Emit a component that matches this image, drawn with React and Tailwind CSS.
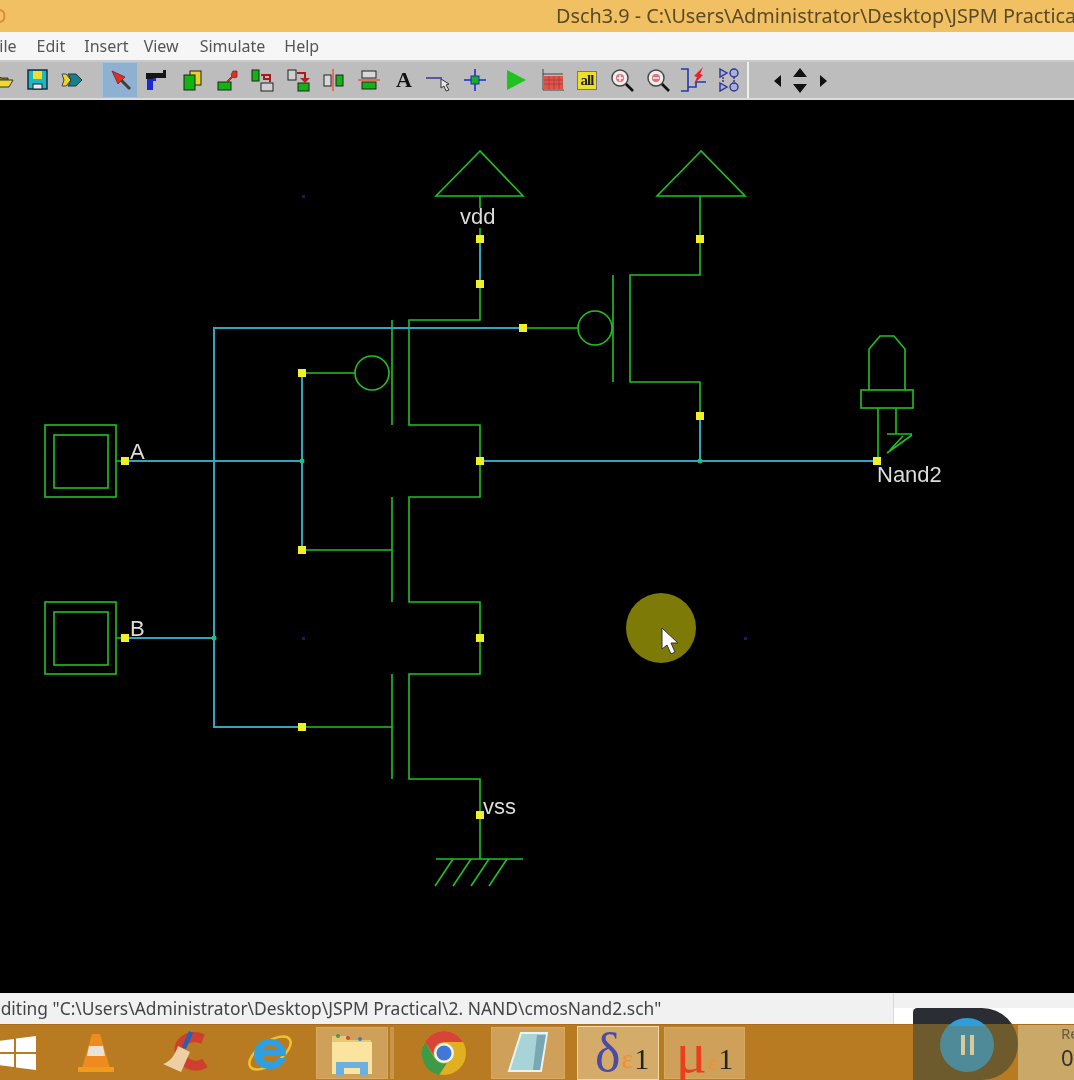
const FONT = "font-['Noto_Sans','Open_Sans',sans-serif]";

const MENU = [
  ['File', 'ml-[-9px]'],
  ['Edit', 'ml-[20px]'],
  ['Insert', 'ml-[19px]'],
  ['View', 'ml-[15px]'],
  ['Simulate', 'ml-[21px]'],
  ['Help', 'ml-[19px]'],
];

// Toolbar glyphs, all on a 24x24 box
function Open() {
  return (
    <svg width="24" height="24" viewBox="0 0 24 24">
      <path d="M2 8h7l2 2h7v3H7l-3 6H2z" fill="#8a7a20" stroke="#333" />
      <path d="M7 12h16l-4 7H3z" fill="#eed92c" stroke="#333" />
    </svg>
  );
}
function Save() {
  return (
    <svg width="24" height="24" viewBox="0 0 24 24">
      <rect x="3" y="2" width="19" height="19" fill="#19b9c4" stroke="#123" strokeWidth="1.4" />
      <rect x="8" y="3" width="9" height="8" fill="#f2dc2c" />
      <rect x="8" y="16" width="9" height="5" fill="#e8e8e8" stroke="#123" />
    </svg>
  );
}
function Chip() {
  return (
    <svg width="24" height="24" viewBox="0 0 24 24">
      <path d="M2 6h4l5 6-5 6H2l2-6z" fill="#e9d82a" stroke="#444" />
      <path d="M8 6h8l6 6-6 6H8l3-6z" fill="#17808a" stroke="#234" />
    </svg>
  );
}
function Pointer() {
  return (
    <svg width="24" height="24" viewBox="0 0 24 24">
      <path d="M11 11l10 10" stroke="#4a3a3a" strokeWidth="3" />
      <path d="M3 3l13 6-7 7z" fill="#e52a20" stroke="#5a3030" strokeWidth="0.8" />
    </svg>
  );
}
function Gun() {
  return (
    <svg width="24" height="24" viewBox="0 0 24 24">
      <path d="M3 9h9v4H9v9H3z" fill="#1e28d8" />
      <path d="M2 5h17V2h3v8H9v1H2z" fill="#151515" />
    </svg>
  );
}
function Copy() {
  return (
    <svg width="24" height="24" viewBox="0 0 24 24">
      <rect x="10" y="3" width="11" height="14" fill="#e8d22a" stroke="#222" />
      <rect x="4" y="7" width="11" height="15" fill="#12b312" stroke="#222" />
    </svg>
  );
}
function MoveUp() {
  return (
    <svg width="24" height="24" viewBox="0 0 24 24">
      <rect x="3" y="14" width="13" height="8" fill="#12b312" stroke="#222" />
      <path d="M12 13l5-5-1-1 2-4h4v6l-3 1-1-1-5 5z" fill="#d8342a" stroke="#622" strokeWidth="0.7" />
    </svg>
  );
}
function SwapA() {
  return (
    <svg width="24" height="24" viewBox="0 0 24 24">
      <rect x="2" y="2" width="7" height="11" fill="#12b312" stroke="#222" />
      <rect x="11" y="15" width="12" height="8" fill="#cfcfcf" stroke="#222" />
      <path d="M11 7h9v7M14 7v4h6" fill="none" stroke="#a81c1c" strokeWidth="2" />
    </svg>
  );
}
function SwapB() {
  return (
    <svg width="24" height="24" viewBox="0 0 24 24">
      <rect x="2" y="2" width="8" height="10" fill="#cfcfcf" stroke="#222" />
      <rect x="12" y="15" width="11" height="8" fill="#12b312" stroke="#222" />
      <path d="M11 5h8v5" fill="none" stroke="#a81c1c" strokeWidth="2" />
      <path d="M14 10h10l-5 5z" fill="#b82020" />
    </svg>
  );
}
function MirrorV() {
  return (
    <svg width="24" height="24" viewBox="0 0 24 24">
      <rect x="3" y="7" width="7" height="11" fill="#d8d8d8" stroke="#222" />
      <rect x="15" y="7" width="7" height="11" fill="#12b312" stroke="#222" />
      <path d="M12 1v22" stroke="#e0584a" strokeWidth="1.5" />
    </svg>
  );
}
function MirrorH() {
  return (
    <svg width="24" height="24" viewBox="0 0 24 24">
      <rect x="5" y="3" width="14" height="7" fill="#d8d8d8" stroke="#222" />
      <rect x="5" y="14" width="14" height="7" fill="#12b312" stroke="#222" />
      <path d="M1 12h22" stroke="#e0584a" strokeWidth="1.5" />
    </svg>
  );
}
function TextTool() {
  return <span className="font-['Liberation_Serif',serif] text-[22px] leading-none font-bold text-[#111]">A</span>;
}
function WireTool() {
  return (
    <svg width="26" height="24" viewBox="0 0 26 24">
      <path d="M0 10h16" stroke="#4338b8" strokeWidth="1.6" />
      <path d="M15 11l8 5-3 1 3 5-3 1-2-5-3 2z" fill="#e8e8e8" stroke="#333" />
    </svg>
  );
}
function NodeTool() {
  return (
    <svg width="24" height="24" viewBox="0 0 24 24">
      <path d="M1 12h22M12 1v22" stroke="#1c2bd0" strokeWidth="1.6" />
      <rect x="8" y="8" width="8" height="8" fill="#12b312" stroke="#1c2bd0" />
    </svg>
  );
}
function Play() {
  return (
    <svg width="24" height="24" viewBox="0 0 24 24">
      <path d="M3 2l19 10-19 10z" fill="#1ec31e" />
    </svg>
  );
}
function Timing() {
  return (
    <svg width="24" height="24" viewBox="0 0 24 24">
      <path d="M3 1v21h21M3 6h20" fill="none" stroke="#444" />
      <rect x="4" y="8" width="19" height="13" fill="#e2534a" />
      <path d="M4 12h19M4 16h19M9 8v13M14 8v13M19 8v13" stroke="#a83a3a" strokeWidth="0.8" />
    </svg>
  );
}
function AllTool() {
  return (
    <div className="w-[20px] h-[19px] bg-[#eee02a] border border-[#777] flex items-center justify-center font-['Liberation_Serif',serif] font-bold text-[15px] leading-none tracking-[-1px] text-[#222]">
      all
    </div>
  );
}
function Zoom({ minus }) {
  return (
    <svg width="24" height="24" viewBox="0 0 24 24">
      <path d="M15 15l8 8" stroke="#111" strokeWidth="2.6" />
      <circle cx="10" cy="10" r="8" fill="#eee" stroke="#444" strokeWidth="1.4" />
      <circle cx="10" cy="10" r="4" fill="#e0707a" />
      <path d={minus ? 'M7 10h6' : 'M7 10h6M10 7v6'} stroke="#fff" strokeWidth="1.4" />
    </svg>
  );
}
function Probe() {
  return (
    <svg width="28" height="28" viewBox="0 0 28 28">
      <path d="M2 3h7v22H2M9 21h8v-5h10" fill="none" stroke="#2438b0" strokeWidth="1.6" />
      <path d="M24 1l-9 9 3 1-3 7 9-9-3-1z" fill="#e8202a" />
    </svg>
  );
}
function Gates() {
  return (
    <svg width="22" height="28" viewBox="0 0 22 28" fill="#a8b0d8" stroke="#2a3490" strokeWidth="1.4">
      <path d="M2 3l7 4-7 4z" />
      <circle cx="16" cy="7" r="4" />
      <path d="M2 17l7 4-7 4z" />
      <circle cx="16" cy="21" r="4" />
      <path d="M5 11v6M16 11v6" fill="none" strokeDasharray="2 1" />
    </svg>
  );
}

const TOOLS = [
  [Open, 'ml-[-16px]'],
  [Save, ''],
  [Chip, ''],
  [Pointer, 'ml-[12px] pl-[3px]', true],
  [Gun, 'ml-[1px]'],
  [Copy, ''],
  [MoveUp, ''],
  [SwapA, ''],
  [SwapB, ''],
  [MirrorV, ''],
  [MirrorH, ''],
  [TextTool, ''],
  [WireTool, ''],
  [NodeTool, ''],
  [Play, 'ml-[6px]'],
  [Timing, ''],
  [AllTool, ''],
  [Zoom, ''],
  [() => <Zoom minus />, ''],
  [Probe, ''],
  [Gates, ''],
];

function Toolbar() {
  return (
    <div className="h-[40px] shrink-0 flex items-stretch bg-[#bdbdbd] border-t-2 border-[#c9c9c9] border-b-2 border-b-[#dcdcdc] overflow-hidden">
      <div className="flex items-center w-[749px] shrink-0 border-r-2 border-[#f0f0f0]">
        {TOOLS.map(([Icon, margin, active], i) => (
          <div
            key={i}
            className={`w-[35.4px] h-[36px] shrink-0 flex items-center justify-center ${margin} ${active ? 'bg-[#8fb1d1] border border-[#a8c0d8]' : ''}`}
          >
            <Icon />
          </div>
        ))}
      </div>
      <svg width="70" height="36" viewBox="0 0 70 36" className="ml-[20px]">
        <path d="M5 19l7-6v12zM24 15l7-9 7 9zM24 22h14l-7 9z" fill="#111" />
        <path d="M51 13l7 6-7 6z" fill="#111" />
      </svg>
    </div>
  );
}

const nodes = [
  [480, 239], [480, 284], [523, 328], [302, 373], [302, 550], [302, 727], [480, 461], [480, 638],
  [480, 815], [125, 461], [125, 638], [700, 239], [700, 416], [877, 461],
];

function Schematic() {
  return (
    <svg width="1074" height="893" viewBox="0 100 1074 893" className="block bg-black">
      {[[303, 196], [303, 638], [745, 638]].map(([x, y]) => (
        <rect key={`${x}${y}`} x={x - 1} y={y - 1} width="3" height="3" fill="#15157a" />
      ))}

      <g fill="none" stroke="#22c022" strokeWidth="1.6">
        {/* power symbols */}
        <path d="M480 151L436 196H523ZM480 196V208M480 228V239" />
        <path d="M701 151L657 196H745ZM700 196V275H630V382H700V416" />

        {/* series stack */}
        <path d="M480 284V320H409V425H480V497H409V602H480V674H409V779H480V859" />
        <path d="M392 320V425M392 497V602M392 674V779M613 275V382" />
        <circle cx="372" cy="373" r="17" />
        <circle cx="595" cy="328" r="17" />
        <path d="M302 373H355M302 550H392M302 727H392M523 328H578M116 461H125M116 638H125" />

        {/* ground */}
        <path d="M436 859H523M453 859L435 886M471 859L453 886M489 859L471 886M507 859L489 886" />

        {/* inputs */}
        <rect x="45" y="425" width="71" height="72" />
        <rect x="54" y="435" width="54" height="53" />
        <rect x="45" y="602" width="71" height="72" />
        <rect x="54" y="612" width="54" height="53" />

        {/* output led */}
        <path d="M869 390V349L880 336H894L905 349V390" />
        <rect x="861" y="390" width="52" height="18" />
        <path d="M878 408V461M896 408V434M887 434H912M912 435L887 453M903 436L890 450" />
      </g>

      <g fill="none" stroke="#2fa6bc" strokeWidth="2">
        <path d="M480 239V284M302 373V550M700 416V461" />
        <path d="M523 328H214V727H302M125 461H302M125 638H214M480 461H877" />
      </g>

      {[[302, 461], [214, 638], [700, 461]].map(([x, y]) => (
        <circle key={`${x}${y}`} cx={x} cy={y} r="2.5" fill="#1fc080" />
      ))}
      {nodes.map(([x, y]) => (
        <rect key={`${x}-${y}`} x={x - 4} y={y - 4} width="8" height="8" fill="#f0f02a" />
      ))}

      <g fill="#dcdcdc" fontSize="22" fontFamily="'Liberation Sans', sans-serif">
        <text x="460" y="224">vdd</text>
        <text x="483" y="814">vss</text>
        <text x="130" y="459">A</text>
        <text x="130" y="636">B</text>
        <text x="877" y="482">Nand2</text>
      </g>

      {/* recorder's cursor highlight */}
      <circle cx="661" cy="628" r="35" fill="#7d7a08" />
      <path d="M662 628V649L667 645L671 654L675 652L671 643L678 643Z" fill="#fff" stroke="#333" />
    </svg>
  );
}

function Windows() {
  return (
    <svg width="36" height="36" viewBox="0 0 36 36" fill="#fff">
      <path d="M-2 6L14 4V17H-2zM16 3.600L36 1V17H16zM-2 19H14V32L-2 30zM16 19H36V35L16 32.400z" />
    </svg>
  );
}
function Cone() {
  return (
    <svg width="38" height="42" viewBox="0 0 38 42">
      <path d="M15 2h8l10 34H5z" fill="#ee8a1e" />
      <path d="M12 14h14l2 10H10z" fill="#e8e2d8" />
      <path d="M1 35h36v5H1z" fill="#f29a1a" />
    </svg>
  );
}
function Cleaner() {
  return (
    <svg width="48" height="46" viewBox="0 0 48 46">
      <path d="M42 9C26 3 14 14 20 26c5 10 16 12 24 7" fill="none" stroke="#cf3f30" strokeWidth="10" />
      <path d="M30 2L23 18" stroke="#2860b8" strokeWidth="4.5" />
      <path d="M17 16l12 6-9 20-18-8c7-2 12-9 15-18z" fill="#ecd0a4" />
    </svg>
  );
}
function Explorer() {
  return (
    <svg width="46" height="46" viewBox="0 0 46 46">
      <ellipse cx="23" cy="23" rx="24" ry="11" transform="rotate(-35 23 23)" fill="none" stroke="#f0c22e" strokeWidth="2.500" />
      <path d="M7 25C7 15 14 9 23 9s16 6 16 17H16c1 7 11 8 15 2h8c-3 8-9 11-16 11C14 39 7 33 7 25zM16 20h15c-1-6-14-6-15 0z" fill="#2e9fe0" />
    </svg>
  );
}
function Folder() {
  return (
    <svg width="44" height="46" viewBox="0 0 44 46">
      <path d="M2 6h14l3 4h22v12H2z" fill="#e8c878" />
      <rect x="2" y="12" width="40" height="32" fill="#fbe3a0" />
      <circle cx="8" cy="6" r="2" fill="#4a9a4a" />
      <circle cx="18" cy="8" r="2" fill="#c84a3a" />
      <circle cx="30" cy="9" r="2" fill="#3a80c0" />
      <path d="M6 45V32h32v13h-8v-7H14v7z" fill="#6ab0e0" />
    </svg>
  );
}
function Chrome() {
  return (
    <svg width="46" height="46" viewBox="0 0 46 46">
      <circle cx="23" cy="23" r="22" fill="#e0b020" />
      <path d="M4 12A22 22 0 0 1 42 12H23A11 11 0 0 0 13 26Z" fill="#d84436" />
      <path d="M4 12L13 27A11 11 0 0 0 26 33L18 45A22 22 0 0 1 4 12Z" fill="#3c9a48" />
      <circle cx="23" cy="23" r="10" fill="#f2f2f2" />
      <circle cx="23" cy="23" r="7.500" fill="#3f78d8" />
    </svg>
  );
}
function Sheet() {
  return (
    <svg width="42" height="44" viewBox="0 0 42 44">
      <path d="M14 2h26l-6 38H2z" fill="#a8d4d8" stroke="#e8f4f4" strokeWidth="2" />
      <path d="M30 4h9l-6 35h-7z" fill="#5a8a9a" fillOpacity="0.6" />
    </svg>
  );
}

function Taskbar() {
  const btn = 'h-[52px] shrink-0 flex items-center justify-center border border-[#d8a860] bg-[#cfa05a]';
  return (
    <div className="h-[56px] shrink-0 flex items-center bg-[#b97b22] border-t border-[#a86c1c] relative overflow-hidden">
      <div className="w-[36px] shrink-0 flex justify-end"><Windows /></div>
      <div className="ml-[39px] w-[42px] flex justify-center"><Cone /></div>
      <div className="ml-[44px] w-[48px] flex justify-center"><Cleaner /></div>
      <div className="ml-[38px] w-[46px] flex justify-center"><Explorer /></div>
      <div className={`ml-[23px] w-[72px] ${btn}`}><Folder /></div>
      <div className="w-[4px] h-[52px] ml-[2px] bg-[#c8954c]" />
      <div className="ml-[27px] w-[46px] flex justify-center"><Chrome /></div>
      <div className={`ml-[24px] w-[74px] ${btn}`}><Sheet /></div>
      <div className="ml-[12px] w-[82px] h-[54px] shrink-0 flex items-center pl-[17px] gap-[1px] border border-[#f0d8a8] bg-[#d5ab6a] font-['Liberation_Serif',serif]">
        <span className="text-[54px] leading-none text-[#4a4aa8]">δ</span>
        <span className="text-[28px] leading-none text-[#f09030] mt-3">ε</span>
        <span className="text-[30px] leading-none text-[#222] mt-3">1</span>
      </div>
      <div className={`ml-[5px] w-[81px] gap-[1px] ${btn} font-['Liberation_Serif',serif]`}>
        <span className="text-[58px] leading-none text-[#e8401e]">μ</span>
        <span className="text-[22px] leading-none text-[#f09030] mt-5">ε</span>
        <span className="text-[30px] leading-none text-[#222] mt-3">1</span>
      </div>
      <div className="absolute right-0 top-0 bottom-0 w-[56px] bg-[#c9a868] flex flex-col text-[#665a40] leading-none">
        <span className="mt-[1px] ml-[43px] text-[15px]">Re</span>
        <span className="mt-[5px] ml-[43px] text-[22px] text-[#333]">0</span>
      </div>
    </div>
  );
}

export default function App() {
  return (
    <div className={`w-[1074px] h-[1080px] flex flex-col overflow-hidden relative blur-[0.4px] ${FONT}`}>
      <div className="h-[32px] shrink-0 bg-[#f1c063] flex items-center whitespace-nowrap text-[19.800px] text-[#5a4a28] overflow-hidden">
        <svg width="8" height="18" viewBox="0 0 8 18" className="shrink-0 mr-[548px]">
          <path d="M0 3c6 1 6 11 0 12" fill="none" stroke="#e08a3a" strokeWidth="2" />
        </svg>
        Dsch3.9 - C:\Users\Administrator\Desktop\JSPM Practical\2. NAND\cmosNand2.sch
      </div>

      <div className="h-[28px] shrink-0 bg-[#f6f6f6] flex items-center text-[16px] text-[#555]">
        {MENU.map(([label, margin]) => (
          <span key={label} className={margin}>{label}</span>
        ))}
      </div>

      <Toolbar />

      <Schematic />

      <div className="h-[31px] shrink-0 bg-[#f1f1f1] flex items-stretch whitespace-nowrap text-[17.400px] text-[#444] overflow-hidden">
        <div className="w-[894px] shrink-0 flex items-center border-r border-[#d8d8d8] overflow-hidden">
          <span className="ml-[-9px]">Editing "C:\Users\Administrator\Desktop\JSPM Practical\2. NAND\cmosNand2.sch"</span>
        </div>
        <div className="flex-1 flex flex-col justify-end">
          <div className="h-[16px] bg-white" />
        </div>
      </div>

      <Taskbar />

      {/* recorder widget lying over the status bar and the taskbar */}
      <div className="absolute left-[913px] bottom-0 w-[105px] h-[72px] rounded-tl-[6px] rounded-r-[52px] bg-[linear-gradient(#2a2d33_0_16px,#6e5b2d_16px)] flex items-center justify-center">
        <div className="w-[54px] h-[54px] mt-[2px] ml-[3px] rounded-full bg-[linear-gradient(#2f9ed8_0_8px,#4f8a98_8px)] flex items-center justify-center gap-[5px]">
          <div className="w-[4px] h-[20px] bg-[#d8c89a]" />
          <div className="w-[4px] h-[20px] bg-[#d8c89a]" />
        </div>
      </div>
    </div>
  );
}
